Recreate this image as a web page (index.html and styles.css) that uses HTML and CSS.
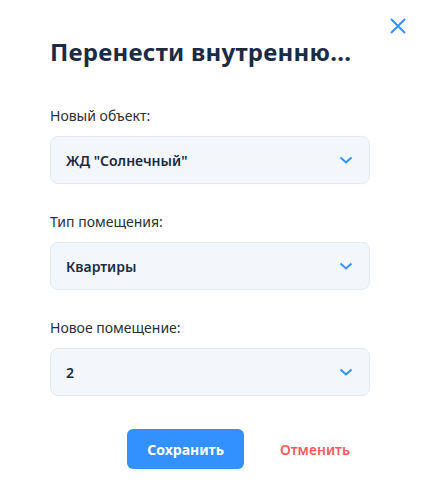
FILE: index.html
```html
<!DOCTYPE html>
<html lang="ru">
<head>
<meta charset="utf-8">
<link rel="stylesheet" href="styles.css">
</head>
<body>
<div class="modal">
  <button class="close" aria-label="Закрыть">
    <svg width="18" height="18" viewBox="0 0 18 18"><path d="M2 2 L16 16 M16 2 L2 16" stroke="#3391ff" stroke-width="2" fill="none"/></svg>
  </button>
  <h1 class="title">Перенести внутренню...</h1>
  <div class="field">
    <div class="label">Новый объект:</div>
    <div class="select"><span>ЖД "Солнечный"</span><svg class="chev" width="14" height="8" viewBox="0 0 14 8"><path d="M1.5 1.5 L7 6.5 L12.5 1.5" stroke="#3391ff" stroke-width="2" fill="none"/></svg></div>
  </div>
  <div class="field">
    <div class="label">Тип помещения:</div>
    <div class="select"><span>Квартиры</span><svg class="chev" width="14" height="8" viewBox="0 0 14 8"><path d="M1.5 1.5 L7 6.5 L12.5 1.5" stroke="#3391ff" stroke-width="2" fill="none"/></svg></div>
  </div>
  <div class="field">
    <div class="label">Новое помещение:</div>
    <div class="select"><span>2</span><svg class="chev" width="14" height="8" viewBox="0 0 14 8"><path d="M1.5 1.5 L7 6.5 L12.5 1.5" stroke="#3391ff" stroke-width="2" fill="none"/></svg></div>
  </div>
  <div class="actions">
    <button class="btn save">Сохранить</button>
    <button class="btn cancel">Отменить</button>
  </div>
</div>
</body>
</html>
```
FILE: styles.css
```css
html, body { margin: 0; padding: 0; background: #fff; }
body { font-family: "Noto Sans", "Open Sans", sans-serif; }
.modal { position: relative; width: 320px; padding: 36px 58px 28px 50px; }
.close { position: absolute; top: 17px; right: 21px; width: 18px; height: 18px; padding: 0; border: 0; background: none; cursor: pointer; display: block; }
.close svg { display: block; }
.title { margin: 0 0 38px; font-size: 24px; line-height: 32px; font-weight: 700; color: #1b2b45; letter-spacing: 0.25px; }
.field { margin-bottom: 28px; }
.label { font-size: 14px; line-height: 20px; color: #2a2f38; margin-bottom: 10px; }
.select { box-sizing: border-box; height: 48px; border: 1px solid #e4e9ef; border-radius: 8px; background: #f3f7fb; display: flex; align-items: center; justify-content: space-between; padding: 0 16px 0 15px; font-size: 14px; font-weight: 600; color: #1b2b45; }
.chev { display: block; }
.actions { display: flex; justify-content: flex-end; gap: 16px; margin-top: 33px; }
.btn { height: 40px; padding: 0 20px; border: 0; border-radius: 6px; font-family: inherit; font-size: 14px; font-weight: 700; cursor: pointer; }
.save { background: #3391ff; color: #fff; }
.cancel { background: none; color: #ff5a5a; font-weight: 600; }
```
